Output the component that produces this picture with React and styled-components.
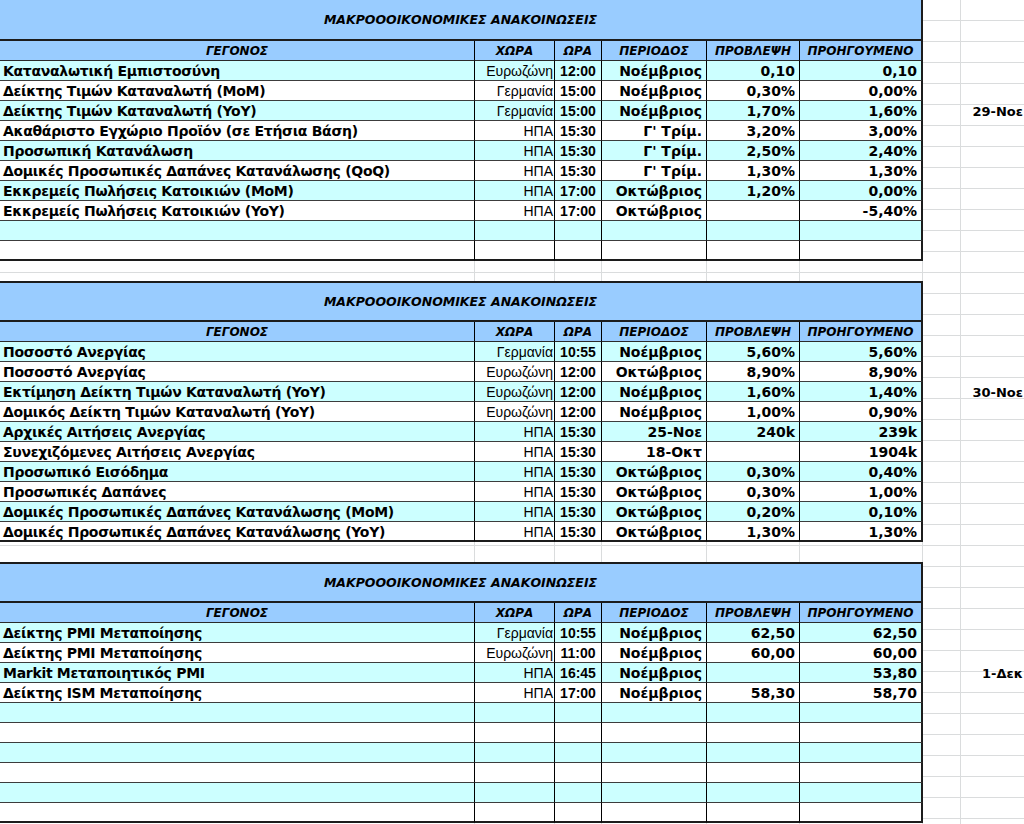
import React from "react";
import styled, { createGlobalStyle } from "styled-components";

const COLS = "475px 80px 47px 105px 93px 123px 38px 1fr";
const GRID = "#dadcdd";

const HEAD = ["ΓΕΓΟΝΟΣ", "ΧΩΡΑ", "ΩΡΑ", "ΠΕΡΙΟΔΟΣ", "ΠΡΟΒΛΕΨΗ", "ΠΡΟΗΓΟΥΜΕΝΟ"];

const BLOCKS = [
  {
    date: "29-Νοε",
    rows: [
      ["Καταναλωτική Εμπιστοσύνη", "Ευρωζώνη", "12:00", "Νοέμβριος", "0,10", "0,10"],
      ["Δείκτης Τιμών Καταναλωτή (MoM)", "Γερμανία", "15:00", "Νοέμβριος", "0,30%", "0,00%"],
      ["Δείκτης Τιμών Καταναλωτή (YoY)", "Γερμανία", "15:00", "Νοέμβριος", "1,70%", "1,60%"],
      ["Ακαθάριστο Εγχώριο Προϊόν (σε Ετήσια Βάση)", "ΗΠΑ", "15:30", "Γ' Τρίμ.", "3,20%", "3,00%"],
      ["Προσωπική Κατανάλωση", "ΗΠΑ", "15:30", "Γ' Τρίμ.", "2,50%", "2,40%"],
      ["Δομικές Προσωπικές Δαπάνες Κατανάλωσης (QoQ)", "ΗΠΑ", "15:30", "Γ' Τρίμ.", "1,30%", "1,30%"],
      ["Εκκρεμείς Πωλήσεις Κατοικιών (MoM)", "ΗΠΑ", "17:00", "Οκτώβριος", "1,20%", "0,00%"],
      ["Εκκρεμείς Πωλήσεις Κατοικιών (YoY)", "ΗΠΑ", "17:00", "Οκτώβριος", "", "-5,40%"],
    ],
  },
  {
    date: "30-Νοε",
    rows: [
      ["Ποσοστό Ανεργίας", "Γερμανία", "10:55", "Νοέμβριος", "5,60%", "5,60%"],
      ["Ποσοστό Ανεργίας", "Ευρωζώνη", "12:00", "Οκτώβριος", "8,90%", "8,90%"],
      ["Εκτίμηση Δείκτη Τιμών Καταναλωτή (YoY)", "Ευρωζώνη", "12:00", "Νοέμβριος", "1,60%", "1,40%"],
      ["Δομικός Δείκτη Τιμών Καταναλωτή (YoY)", "Ευρωζώνη", "12:00", "Νοέμβριος", "1,00%", "0,90%"],
      ["Αρχικές Αιτήσεις Ανεργίας", "ΗΠΑ", "15:30", "25-Νοε", "240k", "239k"],
      ["Συνεχιζόμενες Αιτήσεις Ανεργίας", "ΗΠΑ", "15:30", "18-Οκτ", "", "1904k"],
      ["Προσωπικό Εισόδημα", "ΗΠΑ", "15:30", "Οκτώβριος", "0,30%", "0,40%"],
      ["Προσωπικές Δαπάνες", "ΗΠΑ", "15:30", "Οκτώβριος", "0,30%", "1,00%"],
      ["Δομικές Προσωπικές Δαπάνες Κατανάλωσης (MoM)", "ΗΠΑ", "15:30", "Οκτώβριος", "0,20%", "0,10%"],
      ["Δομικές Προσωπικές Δαπάνες Κατανάλωσης (YoY)", "ΗΠΑ", "15:30", "Οκτώβριος", "1,30%", "1,30%"],
    ],
  },
  {
    date: "1-Δεκ",
    rows: [
      ["Δείκτης PMI Μεταποίησης", "Γερμανία", "10:55", "Νοέμβριος", "62,50", "62,50"],
      ["Δείκτης PMI Μεταποίησης", "Ευρωζώνη", "11:00", "Νοέμβριος", "60,00", "60,00"],
      ["Markit Μεταποιητικός PMI", "ΗΠΑ", "16:45", "Νοέμβριος", "", "53,80"],
      ["Δείκτης ISM Μεταποίησης", "ΗΠΑ", "17:00", "Νοέμβριος", "58,30", "58,70"],
    ],
  },
];

const ROWS_PER_BLOCK = 10;
const DATE_ROW = 2;

const App = () => (
  <>
    <GlobalStyle />
    <Sheet>
      {BLOCKS.map((block, b) => {
        const rows = [...block.rows];
        while (rows.length < ROWS_PER_BLOCK) rows.push(["", "", "", "", "", ""]);
        return (
          <React.Fragment key={b}>
            {b > 0 && <GapRow />}
            <TitleRow>
              <TitleCell $top={b > 0}>ΜΑΚΡΟΟΟΙΚΟΝΟΜΙΚΕΣ ΑΝΑΚΟΙΝΩΣΕΙΣ</TitleCell>
            </TitleRow>
            <Row>
              {HEAD.map((h, i) => (
                <HeadCell key={h} $last={i === 5}>{h}</HeadCell>
              ))}
            </Row>
            {rows.map((r, i) => {
              const alt = i % 2 === 0;
              const bottom = i === ROWS_PER_BLOCK - 1;
              return (
                <Row key={i}>
                  <EventCell $alt={alt} $bottom={bottom}>{r[0]}</EventCell>
                  <CountryCell $alt={alt} $bottom={bottom}>{r[1]}</CountryCell>
                  <TimeCell $alt={alt} $bottom={bottom}>{r[2]}</TimeCell>
                  <ValueCell $alt={alt} $bottom={bottom}>{r[3]}</ValueCell>
                  <ValueCell $alt={alt} $bottom={bottom}>{r[4]}</ValueCell>
                  <ValueCell $alt={alt} $bottom={bottom} $last>{r[5]}</ValueCell>
                  <SideCell />
                  <DateCell>{i === DATE_ROW ? block.date : ""}</DateCell>
                </Row>
              );
            })}
          </React.Fragment>
        );
      })}
    </Sheet>
  </>
);

// ── Styled ──

const GlobalStyle = createGlobalStyle`
  html, body {
    margin: 0;
    padding: 0;
    background: #fff;
  }
  body {
    font-family: "DejaVu Sans", "Liberation Sans", sans-serif;
    color: #000;
    overflow: hidden;
  }
`;

// excel gridlines under everything
const Sheet = styled.div`
  width: 1024px;
  min-height: 824px;
  background-color: #fff;
  background-image:
    repeating-linear-gradient(to bottom, transparent 0 20px, ${GRID} 20px 21px, transparent 21px 20px),
    linear-gradient(${GRID}, ${GRID}), linear-gradient(${GRID}, ${GRID}),
    linear-gradient(${GRID}, ${GRID}), linear-gradient(${GRID}, ${GRID}),
    linear-gradient(${GRID}, ${GRID}), linear-gradient(${GRID}, ${GRID}),
    linear-gradient(${GRID}, ${GRID});
  background-size: 100% 100%, 1px 100%, 1px 100%, 1px 100%, 1px 100%, 1px 100%, 1px 100%, 1px 100%;
  background-position: 0 0, 474px 0, 554px 0, 601px 0, 706px 0, 799px 0, 922px 0, 960px 0;
  background-repeat: no-repeat;
`;

const Row = styled.div`
  display: grid;
  grid-template-columns: ${COLS};
  height: 20px;
`;

const TitleRow = styled(Row)`
  height: 41px;
`;

const GapRow = styled.div`
  height: 20px;
`;

const TitleCell = styled.div`
  grid-column: 1 / 7;
  display: flex;
  align-items: center;
  justify-content: center;
  box-sizing: border-box;
  background: #99ccff;
  border-top: ${(p) => (p.$top ? "2px solid #1c1c1c" : "none")};
  border-right: 2px solid #1c1c1c;
  border-bottom: 2px solid #1c1c1c;
  font-size: 12.5px;
  font-weight: bold;
  font-style: italic;
`;

const HeadCell = styled.div`
  display: flex;
  align-items: center;
  justify-content: center;
  box-sizing: border-box;
  background: #99ccff;
  border-right: ${(p) => (p.$last ? "2px solid #1c1c1c" : "1px solid #000")};
  border-bottom: 1px solid #2a2a2a;
  padding-top: 1px;
  font-size: 12px;
  font-weight: bold;
  font-style: italic;
  white-space: nowrap;
`;

const Cell = styled.div`
  display: flex;
  align-items: center;
  box-sizing: border-box;
  background: ${(p) => (p.$alt ? "#ccffff" : "#fff")};
  border-right: ${(p) => (p.$last ? "2px solid #1c1c1c" : "1px solid #000")};
  border-bottom: ${(p) => (p.$bottom ? "2px solid #1c1c1c" : "1px solid #3c3c3c")};
  padding-top: 1px;
  white-space: nowrap;
  overflow: hidden;
  line-height: 1;
`;

const EventCell = styled(Cell)`
  padding-left: 3px;
  font-size: 14px;
  font-weight: bold;
  letter-spacing: -0.3px;
`;

const CountryCell = styled(Cell)`
  justify-content: flex-end;
  padding-right: 1px;
  font-family: "Liberation Sans", sans-serif;
  font-size: 14px;
`;

const TimeCell = styled(Cell)`
  justify-content: center;
  font-family: "Liberation Sans", sans-serif;
  font-size: 14px;
  font-weight: bold;
`;

const ValueCell = styled(Cell)`
  justify-content: flex-end;
  padding-right: 4px;
  font-size: 14px;
  font-weight: bold;
`;

const SideCell = styled.div``;

const DateCell = styled.div`
  display: flex;
  align-items: center;
  justify-content: flex-end;
  padding-top: 1px;
  padding-right: 1px;
  font-size: 13px;
  font-weight: bold;
  white-space: nowrap;
`;

export default App;
